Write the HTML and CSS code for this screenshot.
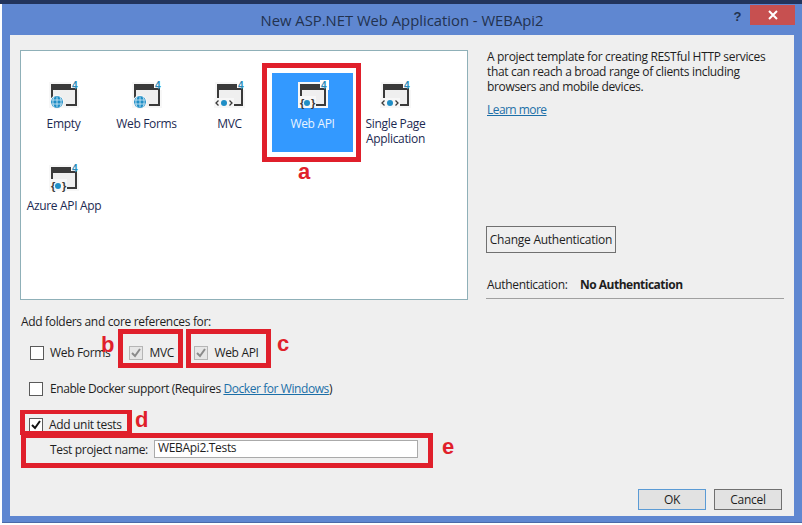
FILE: index.html
```html
<!DOCTYPE html>
<html lang="en">
<head>
<meta charset="utf-8">
<title>New ASP.NET Web Application</title>
<link rel="stylesheet" href="styles.css">
</head>
<body>
<svg class="defs" width="0" height="0" aria-hidden="true">
  <symbol id="win" viewBox="0 0 36 30">
    <rect x="3" y="2" width="30" height="26" class="halo"/>
    <rect x="5" y="4" width="26" height="22" fill="#efefef"/>
    <path d="M5 4h21v4h5v18H20v-2h9V10H7v8H5z" fill="#3a3a3a"/>
    <rect x="25" y="0" width="9" height="10" class="notch"/>
    <path d="M25 8h6v2h-6z" fill="#3a3a3a"/>
  </symbol>
  <symbol id="globe" viewBox="0 0 36 30">
    <circle cx="11" cy="22" r="7" fill="#f7f7f7"/>
    <circle cx="11" cy="22" r="6" fill="#1f8ec6"/>
    <path d="M5.500 20h11M5.500 24h11M11 16.500v11M8 17c-1.500 3-1.500 7 0 10M14 17c1.500 3 1.500 7 0 10" fill="none" stroke="#d8eef8" stroke-width=".8"/>
  </symbol>
  <symbol id="mvc" viewBox="0 0 36 30">
    <rect x="2" y="18" width="20" height="10" fill="#f7f7f7"/>
    <circle cx="12" cy="23" r="3" fill="#1f8ec6"/>
    <path d="M6.500 20.500 4 23l2.500 2.500M17.500 20.500 20 23l-2.500 2.500" fill="none" stroke="#3a3a3a" stroke-width="1.300"/>
  </symbol>
  <symbol id="api" viewBox="0 0 36 30">
    <rect x="3" y="16" width="18" height="12" fill="#f7f7f7"/>
    <circle cx="12" cy="23" r="3" fill="#1f8ec6"/>
  </symbol>
</svg>

<div class="page">
  <div class="topstrip"></div>
  <div class="window">
    <header class="titlebar">
      <span class="title">New ASP.NET Web Application - WEBApi2</span>
      <div class="controls">
        <span class="help">?</span>
        <span class="close">
          <svg width="10" height="10" viewBox="0 0 10 10"><path d="M1 1l8 8M9 1l-8 8" stroke="#fff" stroke-width="2"/></svg>
        </span>
      </div>
    </header>

    <main class="client">
      <div class="upper">
        <section class="templates">
          <div class="tile">
            <svg class="ico" viewBox="0 0 36 30"><use href="#win"/><text x="26" y="9" class="four">4</text><use href="#globe"/></svg>
            <span class="tile-label">Empty</span>
          </div>
          <div class="tile">
            <svg class="ico" viewBox="0 0 36 30"><use href="#win"/><text x="26" y="9" class="four">4</text><use href="#globe"/></svg>
            <span class="tile-label">Web Forms</span>
          </div>
          <div class="tile">
            <svg class="ico" viewBox="0 0 36 30"><use href="#win"/><text x="26" y="9" class="four">4</text><use href="#mvc"/></svg>
            <span class="tile-label">MVC</span>
          </div>
          <div class="tile selected">
            <svg class="ico" viewBox="0 0 36 30"><use href="#win"/><text x="26" y="9" class="four">4</text><use href="#api"/><text x="5" y="27" class="brace">{</text><text x="16" y="27" class="brace">}</text></svg>
            <span class="tile-label">Web API</span>
          </div>
          <div class="tile">
            <svg class="ico" viewBox="0 0 36 30"><use href="#win"/><text x="26" y="9" class="four">4</text><use href="#mvc"/></svg>
            <span class="tile-label">Single Page Application</span>
          </div>
          <div class="tile">
            <svg class="ico" viewBox="0 0 36 30"><use href="#win"/><text x="26" y="9" class="four">4</text><use href="#api"/><text x="5" y="27" class="brace">{</text><text x="16" y="27" class="brace">}</text></svg>
            <span class="tile-label">Azure API App</span>
          </div>
        </section>

        <aside class="details">
          <p class="desc">A project template for creating RESTful HTTP services that can reach a broad range of clients including browsers and mobile devices.</p>
          <a class="link learn">Learn more</a>
          <button class="btn change">Change Authentication</button>
          <div class="auth"><span class="auth-label">Authentication:</span><b>No Authentication</b></div>
        </aside>
      </div>

      <div class="lower">
        <div class="options">
          <p class="heading">Add folders and core references for:</p>
          <div class="refs">
            <label class="check"><span class="box"></span>Web Forms</label>
            <label class="check mvc"><span class="box off"><svg width="12" height="12" viewBox="0 0 12 12"><path d="M2 6l3 3 5-7" fill="none" stroke="#8a8a8a" stroke-width="2"/></svg></span>MVC</label>
            <label class="check webapi"><span class="box off"><svg width="12" height="12" viewBox="0 0 12 12"><path d="M2 6l3 3 5-7" fill="none" stroke="#8a8a8a" stroke-width="2"/></svg></span>Web API</label>
          </div>
          <label class="check docker"><span class="box"></span>Enable Docker support (Requires&nbsp;<a class="link">Docker for Windows</a>)</label>
          <label class="check unit"><span class="box"><svg width="12" height="12" viewBox="0 0 12 12"><path d="M2 6l3 3 5-7" fill="none" stroke="#111" stroke-width="2"/></svg></span>Add unit tests</label>
          <div class="testname"><span class="testlabel">Test project name:</span><span class="input">WEBApi2.Tests</span></div>
        </div>
        <div class="actions">
          <button class="btn action default">OK</button>
          <button class="btn action">Cancel</button>
        </div>
      </div>
    </main>
  </div>

  <div class="mark mark-a"></div>
  <div class="mark mark-b"></div>
  <div class="mark mark-c"></div>
  <div class="mark mark-d"></div>
  <div class="mark mark-e"></div>
  <span class="letter l-a">a</span>
  <span class="letter l-b">b</span>
  <span class="letter l-c">c</span>
  <span class="letter l-d">d</span>
  <span class="letter l-e">e</span>
</div>
</body>
</html>
```

FILE: styles.css
```css
* { box-sizing: border-box; }
html, body { margin: 0; padding: 0; background: #fff; }
body {
  font-family: "Open Sans", "Noto Sans", sans-serif;
  font-size: 12px;
  line-height: 15px;
  letter-spacing: -.33px;
  color: #1e1e1e;
  overflow: hidden;
}
.defs { position: absolute; }
.four { font: bold 10px "Liberation Sans", sans-serif; letter-spacing: 0; fill: #2a8bb8; }
.brace { font: bold 11px "Liberation Sans", sans-serif; letter-spacing: 0; fill: #3a3a3a; }
.halo { fill: #f7f7f7; }
.notch { fill: #fff; }
.selected .halo { fill: #fff; }
.selected .notch { fill: #3399ff; }

.page { position: relative; width: 802px; height: 525px; overflow: hidden; }
.topstrip { height: 4px; background: #22345c; }
.window {
  margin-left: 2px;
  height: 519px;
  background: #5f87d1;
  border-bottom: 1px solid #4a6aa8;
  display: flex;
  flex-direction: column;
}

.titlebar {
  height: 31px;
  flex: none;
  display: flex;
  align-items: center;
  justify-content: center;
  position: relative;
}
.title { font-size: 14.800px; letter-spacing: 0; color: #22324f; margin-top: 2px; }
.controls {
  position: absolute;
  top: 1px;
  right: 7px;
  display: flex;
  align-items: flex-start;
}
.help { font: bold 13px "Liberation Sans", sans-serif; color: #22324f; margin: 4px 9px 0 0; }
.close {
  width: 45px;
  height: 20px;
  background: #c75050;
  display: flex;
  align-items: center;
  justify-content: center;
}

.client {
  width: 784px;
  height: 481px;
  margin-left: 8px;
  background: #efefef;
  display: flex;
  flex-direction: column;
  padding: 15px 0 0 10px;
}
.upper { display: flex; height: 250px; flex: none; }

.templates {
  width: 448px;
  height: 250px;
  background: #fff;
  border: 1px solid #8fb0b8;
  padding: 22px 0 0 2px;
  display: grid;
  grid-template-columns: repeat(5, 81px);
  grid-auto-rows: 79px;
  column-gap: 2px;
  row-gap: 4px;
  color: #1c2a52;
}
.tile { display: flex; flex-direction: column; align-items: center; padding-top: 7px; }
.ico { width: 36px; height: 30px; flex: none; }
.tile-label { text-align: center; margin-top: 6px; white-space: normal; }
.tile.selected { background: #3399ff; color: #e8f4ff; }
.tile:last-child { width: 90px; margin-left: -4px; }
.tile:last-child .tile-label { margin-top: 5px; }
.tile:nth-child(5) .tile-label { width: 80px; }

.details { margin-left: 19px; width: 298px; display: flex; flex-direction: column; align-items: flex-start; margin-top: -1px; }
.desc { margin: 0; width: 290px; }
.link { color: #1c6fa8; text-decoration: underline; }
.learn { margin-top: 8px; letter-spacing: -.55px; }
.btn {
  font: inherit;
  letter-spacing: -.25px;
  color: #1e1e1e;
  border: 1px solid #707070;
  background: #efefef;
  padding: 0;
}
.change { margin-top: 109px; margin-left: -1px; width: 130px; height: 27px; }
.auth {
  margin-top: 17px;
  margin-left: -1px;
  width: 298px;
  height: 29px;
  padding: 7px 0 0 1px;
  border-bottom: 1px solid #a0a0a0;
  display: flex;
}
.auth-label { width: 93px; }
.auth b { letter-spacing: -.5px; }

.lower { flex: 1; display: flex; flex-direction: column; justify-content: space-between; }
.heading { margin: 14px 0 0 1px; }
.check { display: flex; align-items: center; white-space: nowrap; }
.box {
  width: 14px;
  height: 14px;
  flex: none;
  border: 1px solid #5a5a5a;
  background: #fff;
  margin-right: 6px;
  display: flex;
  align-items: center;
  justify-content: center;
}
.box.off { border-color: #b5b5b5; background: #e6e6e6; }
.refs { display: flex; margin: 16px 0 0 10px; }
.mvc { margin-left: 19px; width: 65px; }
.webapi { margin-left: 0; }
.docker { margin: 21px 0 0 9px; letter-spacing: -.42px; }
.docker .box { margin-right: 7px; }
.unit { margin: 21px 0 0 9px; }
.testname { display: flex; align-items: center; margin: 8px 0 0 30px; }
.testlabel { width: 98px; white-space: nowrap; }
.input {
  margin-left: 6px;
  width: 264px;
  height: 18px;
  background: #fff;
  border: 1px solid #aaa;
  padding-left: 3px;
  line-height: 14px;
}
.actions { display: flex; justify-content: flex-end; gap: 8px; padding: 0 12px 6px 0; }
.action { width: 68px; height: 21px; background: #e2e2e2; }
.default { border-color: #5b9bd5; }

.mark { position: absolute; border: 5px solid #e01f2b; }
.mark-a { left: 262px; top: 63px; width: 99px; height: 99px; }
.mark-b { left: 118px; top: 329px; width: 65px; height: 39px; }
.mark-c { left: 186px; top: 329px; width: 85px; height: 39px; }
.mark-d { left: 20px; top: 410px; width: 112px; height: 25px; border-width: 4px 5px; }
.mark-e { left: 21px; top: 433px; width: 412px; height: 35px; }
.letter {
  position: absolute;
  font: bold 22px/22px "Liberation Sans", sans-serif;
  letter-spacing: 0;
  color: #e01f2b;
}
.l-a { left: 298px; top: 161px; }
.l-b { left: 101px; top: 334px; }
.l-c { left: 277px; top: 333px; }
.l-d { left: 135px; top: 409px; }
.l-e { left: 442px; top: 436px; }
```
